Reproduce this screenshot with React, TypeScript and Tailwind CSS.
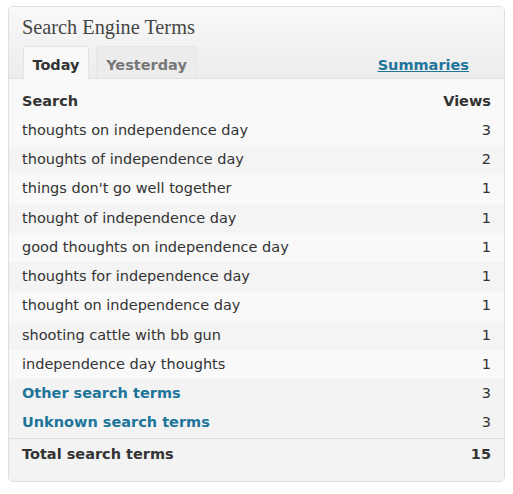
import React from "react";

const rows: [string, number][] = [
  ["thoughts on independence day", 3],
  ["thoughts of independence day", 2],
  ["things don't go well together", 1],
  ["thought of independence day", 1],
  ["good thoughts on independence day", 1],
  ["thoughts for independence day", 1],
  ["thought on independence day", 1],
  ["shooting cattle with bb gun", 1],
  ["independence day thoughts", 1],
];

export default function App() {
  return (
    <div className="w-[513px] h-[494px] bg-white pt-[6px] pl-[8px]" style={{ fontFamily: '"DejaVu Sans", sans-serif' }}>
      <div className="w-[497px] h-[476px] border border-[#dfdfdf] rounded-[5px] overflow-hidden bg-[#f9f9f9] flex flex-col">
        <div className="h-[72px] bg-gradient-to-b from-[#f9f9f9] to-[#ececec] border-b border-[#dfdfdf] flex flex-col">
          <div className="pl-[13px] pt-[8px] h-[40px] text-[20.3px] leading-[24px] text-[#464646]" style={{ fontFamily: '"Liberation Serif", serif' }}>
            Search Engine Terms
          </div>
          <div className="flex items-end flex-1 pl-[14px] pr-[35px] relative">
            <div className="w-[66px] h-[33px] pt-[5px] bg-[#f9f9f9] border border-b-0 border-[#e3e3e3] rounded-t-[3px] flex items-center justify-center text-[14.5px] font-bold text-[#333] -mb-px relative z-10">
              Today
            </div>
            <div className="ml-[7px] w-[101px] h-[32px] pt-[7px] bg-[#ececec] border border-b-0 border-[#e6e6e6] rounded-t-[3px] flex items-center justify-center text-[14.5px] font-bold text-[#777]">
              Yesterday
            </div>
            <div className="ml-auto mb-[1px] text-[14.5px] font-bold text-[#21759b] underline">Summaries</div>
          </div>
        </div>
        <div className="flex flex-col text-[14.5px] text-[#333]">
          <div className="h-[37px] pt-[8px] flex items-center justify-between pl-[13px] pr-[13px] font-bold bg-[#f9f9f9]">
            <span>Search</span>
            <span>Views</span>
          </div>
          {rows.map(([t, v], i) => (
            <div key={i} className={`h-[29.27px] flex items-center justify-between pl-[13px] pr-[13px] ${i % 2 === 0 ? "bg-[#f9f9f9]" : "bg-[#f4f4f4]"}`}>
              <span>{t}</span>
              <span>{v}</span>
            </div>
          ))}
          <div className="h-[29.27px] flex items-center justify-between pl-[13px] pr-[13px] bg-[#f3f3f3]">
            <span className="font-bold text-[#21759b]">Other search terms</span>
            <span>3</span>
          </div>
          <div className="h-[29.27px] flex items-center justify-between pl-[13px] pr-[13px] bg-[#f3f3f3]">
            <span className="font-bold text-[#21759b]">Unknown search terms</span>
            <span>3</span>
          </div>
        </div>
        <div className="flex-1 border-t border-[#dfdfdf] bg-[#f3f3f3] flex justify-between pl-[13px] pr-[13px] pt-[5px] text-[14.5px] font-bold text-[#333]">
          <span>Total search terms</span>
          <span>15</span>
        </div>
      </div>
    </div>
  );
}
